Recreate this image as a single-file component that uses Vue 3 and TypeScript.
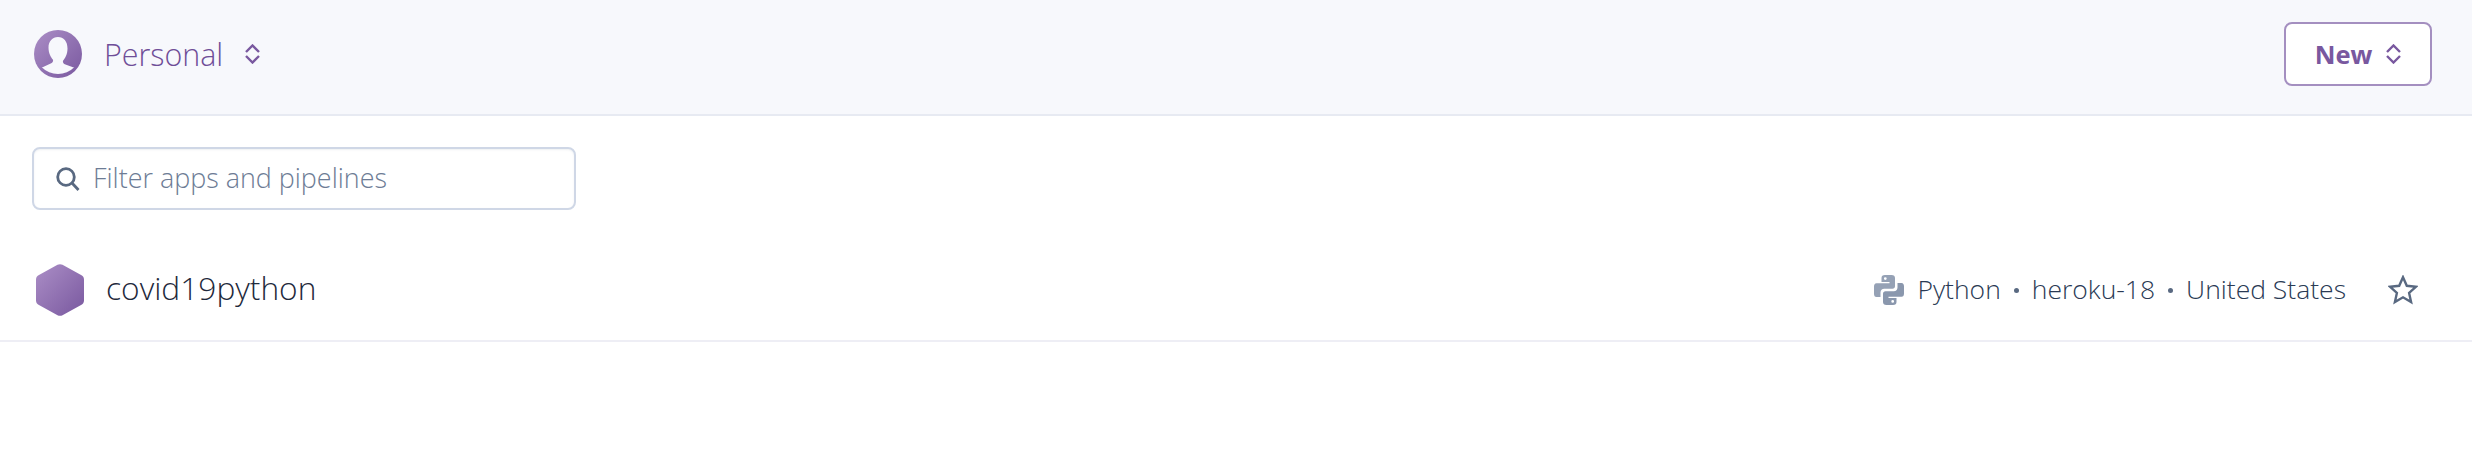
<script setup lang="ts">
const meta = ["Python", "heroku-18", "United States"];
</script>

<template>
  <main class="page">
    <header class="top-bar">
      <div class="account">
        <svg class="avatar" viewBox="0 0 48 48">
          <defs>
            <linearGradient id="purple" x1="0" y1="0" x2="1" y2="1">
              <stop offset="0" stop-color="#ab8ec6" />
              <stop offset="1" stop-color="#79589f" />
            </linearGradient>
            <clipPath id="disc"><circle cx="24" cy="21" r="23" /></clipPath>
          </defs>
          <circle cx="24" cy="24" r="24" fill="url(#purple)" />
          <g clip-path="url(#disc)" fill="#f7f8fc">
            <path d="M24 7c-5.600 0-9.500 4.200-9.500 10.500 0 5.500 2.300 9.800 4.500 12.200.3 1.600-.2 2.900-1.800 3.500L7 38v10h34V38l-10.200-3.800c-1.600-.6-2.100-1.900-1.800-3.500 2.200-2.400 4.500-6.700 4.500-12.200C33.500 11.200 29.600 7 24 7z" />
          </g>
        </svg>
        <span class="account-name">Personal</span>
        <svg class="chevrons account-chevrons" viewBox="0 0 15 20">
          <path d="M1 8 7.500 1.500 14 8M1 12l6.500 6.500L14 12" />
        </svg>
      </div>
      <button class="new-button">
        <span>New</span>
        <svg class="chevrons" viewBox="0 0 15 20">
          <path d="M1 8 7.500 1.500 14 8M1 12l6.500 6.500L14 12" />
        </svg>
      </button>
    </header>

    <div class="filter-wrap">
      <label class="filter">
        <svg class="search-icon" viewBox="0 0 24 24">
          <circle cx="10" cy="10" r="8.300" />
          <path d="m16 16 6.500 7" />
        </svg>
        <input type="text" placeholder="Filter apps and pipelines" />
      </label>
    </div>

    <section class="app-row">
      <svg class="hexagon" viewBox="0 0 48 52">
        <path
          d="M21.500.8c1.500-.8 3.500-.8 5 0l19 10.400c1.600.9 2.500 2.400 2.500 4.200v21.200c0 1.800-.9 3.300-2.500 4.200l-19 10.400c-1.500.8-3.500.8-5 0l-19-10.400C.9 39.900 0 38.400 0 36.600V15.400c0-1.800.9-3.300 2.500-4.200z"
          fill="url(#purple)"
        />
      </svg>
      <span class="app-name">covid19python</span>
      <div class="app-meta">
        <svg class="python-icon" viewBox="0 0 30 30">
          <path
            fill="#95a1b5"
            fill-rule="evenodd"
            d="M11 0C8.500 0 7.500 1.200 7.500 3v4h8v1.200H2.500C.8 8.200 0 9.500 0 11.500v7.200c0 2 .8 3.300 2.500 3.300h4v-4.500c0-2.300 1.500-3.700 3.700-3.700h8.300c1.500 0 2.500-1 2.500-2.500V3c0-2-1.200-3-3.500-3zm.3 2.200a1.400 1.400 0 1 1 0 2.800 1.400 1.400 0 0 1 0-2.800z"
          />
          <path
            fill="#8a97ad"
            fill-rule="evenodd"
            d="M19 30c2.500 0 3.500-1.200 3.500-3v-4h-8v-1.200h13c1.700 0 2.500-1.300 2.500-3.300v-7.200c0-2-.8-3.300-2.500-3.300h-4v4.500c0 2.300-1.500 3.700-3.700 3.700h-8.300c-1.500 0-2.500 1-2.500 2.500V27c0 2 1.200 3 3.500 3zm-.3-2.200a1.400 1.400 0 1 1 0-2.800 1.400 1.400 0 0 1 0 2.800z"
          />
        </svg>
        <template v-for="(item, i) in meta" :key="item">
          <span v-if="i > 0" class="dot"></span>
          <span class="meta-text">{{ item }}</span>
        </template>
        <svg class="star" viewBox="0 0 30 30">
          <path d="M15 2.200l3.800 8.600 9.300.9-7 6.200 2 9.200L15 22.300l-8.100 4.800 2-9.200-7-6.200 9.300-.9z" />
        </svg>
      </div>
    </section>
  </main>
</template>

<style scoped>
.page {
  width: 100%;
  height: 452px;
  overflow: hidden;
  background: #fff;
  font-family: "Open Sans", "Noto Sans", sans-serif;
}

.top-bar {
  box-sizing: border-box;
  height: 116px;
  padding: 0 40px 6px 34px;
  display: flex;
  align-items: center;
  justify-content: space-between;
  background: #f7f8fc;
  border-bottom: 2px solid #e7eaf2;
}

.account {
  display: flex;
  align-items: center;
}

.avatar {
  width: 48px;
  height: 48px;
}

.account-name {
  margin-left: 22px;
  font-size: 30.400px;
  font-weight: 300;
  color: #6f4e98;
}

.chevrons {
  width: 15px;
  height: 20px;
  fill: none;
  stroke: #79589f;
  stroke-width: 2.400;
}

.account-chevrons {
  margin-left: 22px;
}

.new-button {
  box-sizing: border-box;
  width: 148px;
  height: 64px;
  display: flex;
  align-items: center;
  justify-content: center;
  gap: 14px;
  padding: 0;
  background: #fff;
  border: 2px solid #a48fc0;
  border-radius: 8px;
  font-family: inherit;
  font-size: 25.500px;
  font-weight: 700;
  color: #79589f;
}

.filter-wrap {
  padding: 31px 0 0 32px;
}

.filter {
  box-sizing: border-box;
  width: 544px;
  height: 63px;
  display: flex;
  align-items: center;
  gap: 13px;
  padding-left: 22px;
  border: 2px solid #cfd7e6;
  border-radius: 8px;
  box-shadow: inset 0 1px 2px rgba(89, 105, 129, 0.1);
}

.search-icon {
  width: 24px;
  height: 24px;
  flex-shrink: 0;
  fill: none;
  stroke: #596981;
  stroke-width: 2.800;
}

.filter input {
  flex: 1;
  min-width: 0;
  margin-bottom: 3px;
  border: 0;
  outline: 0;
  padding: 0;
  background: transparent;
  font-family: inherit;
  font-size: 26.900px;
  font-weight: 300;
  color: #3f3f44;
}

.filter input::placeholder {
  color: #6d7c95;
  opacity: 1;
}

.app-row {
  box-sizing: border-box;
  height: 132px;
  padding: 30px 54px 0 36px;
  display: flex;
  align-items: center;
  border-bottom: 2px solid #eeeef5;
}

.hexagon {
  width: 48px;
  height: 52px;
}

.app-name {
  margin-left: 22px;
  margin-bottom: 6px;
  font-size: 31.700px;
  font-weight: 300;
  color: #1f2a3c;
}

.app-meta {
  margin-left: auto;
  display: flex;
  align-items: center;
  font-size: 26.500px;
  font-weight: 300;
  color: #2a3a54;
}

.meta-text {
  margin-bottom: 2px;
}

.python-icon {
  width: 30px;
  height: 30px;
  margin-right: 13px;
}

.dot {
  width: 5px;
  height: 5px;
  margin: 0 13px;
  border-radius: 50%;
  background: #596981;
}

.star {
  width: 30px;
  height: 30px;
  margin-left: 42px;
  fill: none;
  stroke: #596981;
  stroke-width: 2.400;
}
</style>

<style>
html,
body {
  margin: 0;
  background: #fff;
}
</style>
